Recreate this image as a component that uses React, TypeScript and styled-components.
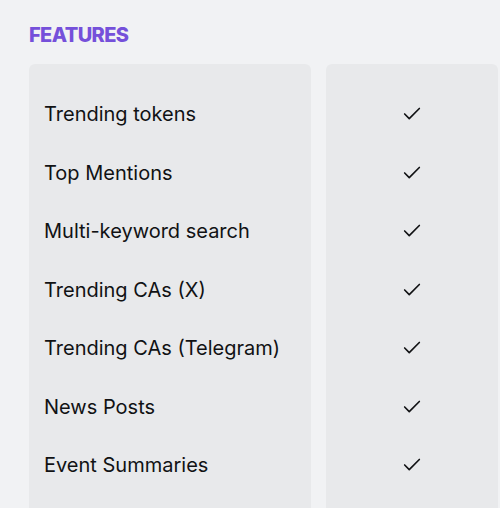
import styled, { createGlobalStyle } from 'styled-components'
import { Check } from 'lucide-react'

const GlobalStyle = createGlobalStyle`
    html, body {
        margin: 0;
        padding: 0;
        background: #f1f2f4;
        font-family: Inter, "Noto Sans", sans-serif;
    }
`

const Page = styled.div`
    padding: 21px 0 0 29px;
    overflow: hidden;
    height: 508px;
    box-sizing: border-box;
`

const Title = styled.h2`
    margin: 0 0 15px;
    font-size: 20px;
    line-height: 28px;
    font-weight: 800;
    letter-spacing: -0.6px;
    color: #7550da;
    text-transform: uppercase;
`

const Table = styled.div`
    display: grid;
    grid-template-columns: 282px 172px;
    gap: 15px;
    align-items: start;
`

const Panel = styled.div<{ $center?: boolean }>`
    background: #e8e9eb;
    border-radius: 6px;
    padding: 21px 15px 40px;
    display: flex;
    flex-direction: column;
    align-items: ${p => (p.$center ? 'center' : 'stretch')};
`

const Row = styled.div`
    height: 58.5px;
    display: flex;
    align-items: center;
    font-size: 20px;
    font-weight: 400;
    color: #111214;
    white-space: nowrap;
`

const features = [
    'Trending tokens',
    'Top Mentions',
    'Multi-keyword search',
    'Trending CAs (X)',
    'Trending CAs (Telegram)',
    'News Posts',
    'Event Summaries',
]

const App = () => (
    <Page>
        <GlobalStyle />
        <Title>Features</Title>
        <Table>
            <Panel>
                {features.map(f => <Row key={f}>{f}</Row>)}
            </Panel>
            <Panel $center>
                {features.map(f => (
                    <Row key={f}>
                        <Check size={22} strokeWidth={1.8} color="#111214" />
                    </Row>
                ))}
            </Panel>
        </Table>
    </Page>
)

export default App
